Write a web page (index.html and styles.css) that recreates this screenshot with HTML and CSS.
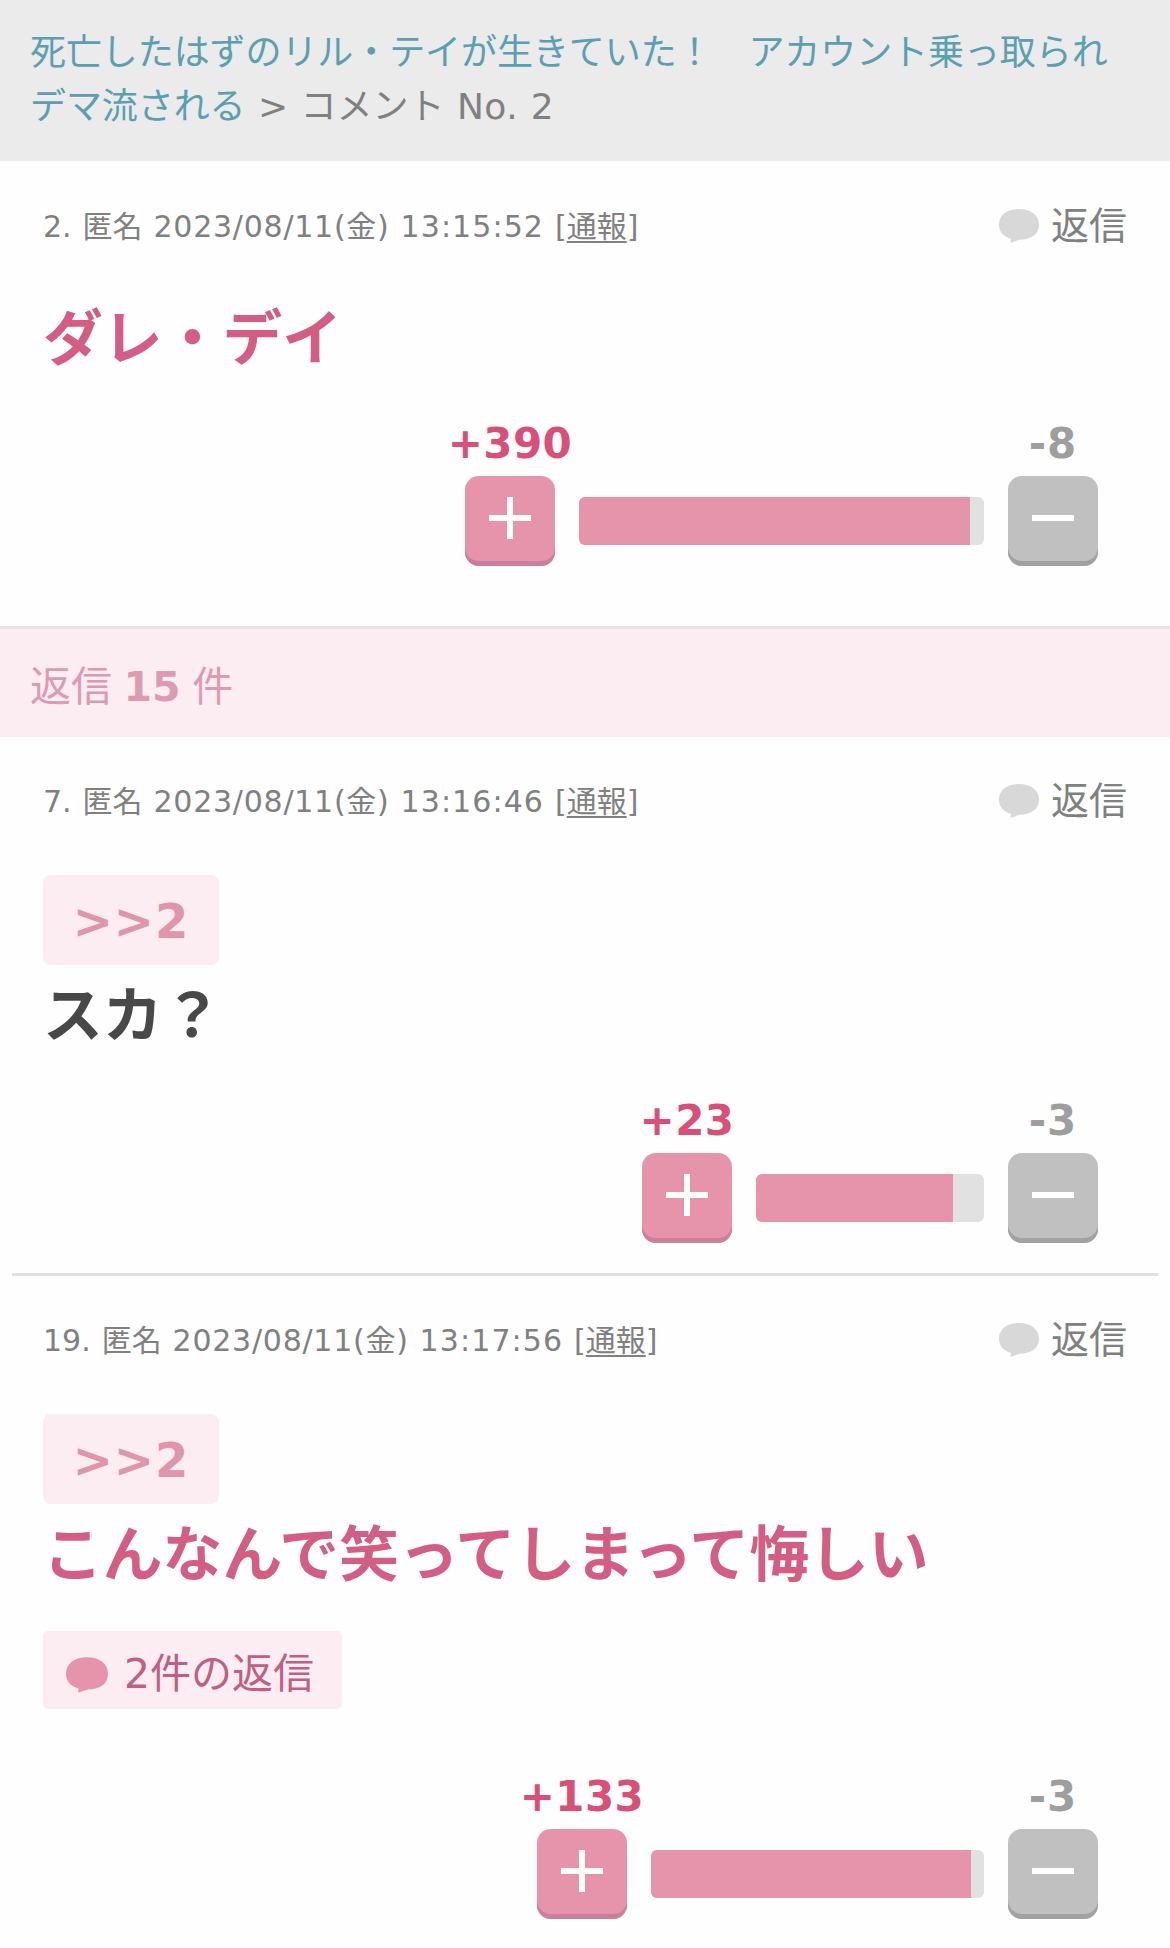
FILE: index.html
```
<!DOCTYPE html>
<html lang="ja">

<head>
    <meta charset="UTF-8">
    <meta name="viewport" content="width=device-width, initial-scale=1.0">
    <title>コメント No. 2</title>
    <link rel="stylesheet" href="styles.css">
</head>

<body>
    <svg class="defs">
        <symbol id="bubble" viewBox="0 0 40 34">
            <path d="M20 0C7.500 0 0 6.500 0 15.500c0 7.500 4.500 12.300 12 14.300L11.500 34l9-3.200C33 30.500 40 25 40 15.500 40 6.500 32.500 0 20 0z"/>
        </symbol>
    </svg>

    <div class="crumb"><a>死亡したはずのリル・テイが生きていた！　アカウント乗っ取られデマ流される</a> &gt; コメント <span class="no">No. 2</span></div>

    <div class="comment first">
        <div class="info">
            <p class="meta">2. 匿名 <span class="date">2023/08/11(金)</span> <span class="time">13:15:52</span> [<a>通報</a>]</p>
            <a class="reply"><svg><use href="#bubble"/></svg>返信</a>
        </div>
        <div class="body pink">ダレ・デイ</div>
        <div class="votes">
            <div class="vote plus">
                <p>+390</p>
                <button><i></i></button>
            </div>
            <div class="bar" style="width: 405px"><span style="width: 391px"></span></div>
            <div class="vote minus">
                <p>-8</p>
                <button><i></i></button>
            </div>
        </div>
    </div>

    <div class="count">返信 <b>15</b> 件</div>

    <div class="comment">
        <div class="info">
            <p class="meta">7. 匿名 <span class="date">2023/08/11(金)</span> <span class="time">13:16:46</span> [<a>通報</a>]</p>
            <a class="reply"><svg><use href="#bubble"/></svg>返信</a>
        </div>
        <a class="anchor">&gt;&gt;2</a>
        <div class="body">スカ？</div>
        <div class="votes">
            <div class="vote plus">
                <p>+23</p>
                <button><i></i></button>
            </div>
            <div class="bar" style="width: 228px"><span style="width: 197px"></span></div>
            <div class="vote minus">
                <p>-3</p>
                <button><i></i></button>
            </div>
        </div>
    </div>

    <div class="line"></div>

    <div class="comment">
        <div class="info">
            <p class="meta">19. 匿名 <span class="date">2023/08/11(金)</span> <span class="time">13:17:56</span> [<a>通報</a>]</p>
            <a class="reply"><svg><use href="#bubble"/></svg>返信</a>
        </div>
        <a class="anchor">&gt;&gt;2</a>
        <div class="body pink">こんなんで笑ってしまって悔しい</div>
        <a class="replies"><svg><use href="#bubble"/></svg>2件の返信</a>
        <div class="votes">
            <div class="vote plus">
                <p>+133</p>
                <button><i></i></button>
            </div>
            <div class="bar" style="width: 333px"><span style="width: 320px"></span></div>
            <div class="vote minus">
                <p>-3</p>
                <button><i></i></button>
            </div>
        </div>
    </div>
</body>

</html>
```
FILE: styles.css
```
* {
    margin: 0;
    padding: 0;
    box-sizing: border-box;
}

body {
    background: #fefefe;
    color: #808080;
    font-family: "DejaVu Sans", "Noto Sans CJK JP", sans-serif;
}

.defs {
    display: none;
}

/* パンくず */
.crumb {
    height: 161px;
    padding: 26px 30px 0;
    background: #ebebeb;
    font-size: 36px;
    line-height: 54px;
    word-spacing: 1px;
}

.crumb a {
    color: #5b9fb0;
    letter-spacing: -.08px;
}

.crumb .no {
    letter-spacing: .4px;
}

/* コメント */
.comment {
    padding: 34px 43px 30px;
}

.first {
    padding: 35px 43px 60px;
}

.info {
    display: flex;
    justify-content: space-between;
    align-items: center;
    height: 60px;
    margin-bottom: 44px;
}

.meta {
    font-size: 30px;
    line-height: 61px;
    word-spacing: 1.4px;
}

.meta a {
    text-decoration: underline;
    text-decoration-thickness: 2px;
    text-underline-offset: 4px;
}

.date {
    letter-spacing: .75px;
}

.time {
    letter-spacing: 1.1px;
}

.reply {
    display: flex;
    align-items: center;
    font-size: 38px;
    line-height: 60px;
}

.reply svg {
    width: 40px;
    height: 34px;
    margin: 0 12px 1px 0;
    fill: #d8d8d8;
}

.anchor {
    display: block;
    width: 176px;
    height: 90px;
    margin-bottom: 12px;
    border-radius: 8px;
    background: #fcedf2;
    color: #e095ad;
    font-size: 48px;
    font-weight: bold;
    line-height: 92px;
    letter-spacing: .9px;
    text-align: center;
}

.body {
    color: #484848;
    font-size: 59.8px;
    font-weight: bold;
    line-height: 78px;
    height: 72px;
}

.pink {
    color: #d45d84;
}

.replies {
    display: flex;
    align-items: center;
    width: 299px;
    height: 78px;
    margin: 43px 0 63px;
    padding-left: 23px;
    border-radius: 5px;
    background: #fcedf2;
    color: #c05f81;
    font-size: 41px;
}

.replies svg {
    width: 42px;
    height: 36px;
    margin: 10px 16px 0 0;
    fill: #e594ac;
}

/* 投票 */
.votes {
    display: flex;
    justify-content: flex-end;
    align-items: flex-end;
    gap: 24px;
    margin-top: 47px;
    padding-right: 29px;
}

.replies + .votes {
    margin-top: 0;
}

.vote {
    width: 90px;
}

.vote p {
    display: flex;
    justify-content: center;
    height: 50px;
    margin-bottom: 7px;
    color: #9e9e9e;
    font-size: 42px;
    font-weight: bold;
    line-height: 50px;
    letter-spacing: 1px;
    white-space: nowrap;
}

.plus p {
    color: #d94f78;
    letter-spacing: .4px;
}

.vote button {
    display: flex;
    justify-content: center;
    align-items: center;
    width: 90px;
    height: 90px;
    padding-bottom: 6px;
    border: none;
    border-radius: 14px;
    background: #c0c0c0;
    box-shadow: inset 0 -5px 0 #a2a2a2;
}

.plus button {
    background: #e594ac;
    box-shadow: inset 0 -5px 0 #ca8098;
}

.vote i {
    width: 42px;
    height: 6px;
    background: #fff;
}

.plus i {
    height: 42px;
    background: linear-gradient(#fff, #fff) center / 42px 6px no-repeat,
        linear-gradient(#fff, #fff) center / 6px 42px no-repeat;
}

.bar {
    height: 48px;
    margin-bottom: 21px;
    border-radius: 6px;
    background: #e1e1e1;
    overflow: hidden;
}

.bar span {
    display: block;
    height: 100%;
    background: #e594ac;
}

.count {
    height: 111px;
    padding-left: 30px;
    border-top: 3px solid #eee0e5;
    background: #fcedf2;
    color: #dc9bb1;
    font-size: 41px;
    line-height: 116px;
    word-spacing: -1.5px;
}

.line {
    height: 3px;
    margin: 0 12px;
    background: #e0e0e0;
}
```
